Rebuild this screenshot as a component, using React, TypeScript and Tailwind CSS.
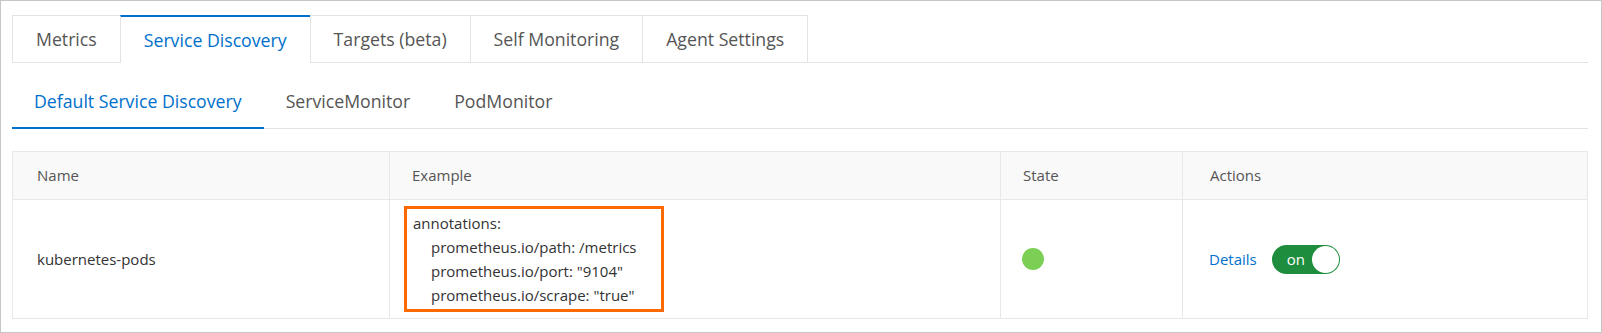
import React from "react";

const tabs = ["Metrics", "Service Discovery", "Targets (beta)", "Self Monitoring", "Agent Settings"];
const subTabs = ["Default Service Discovery", "ServiceMonitor", "PodMonitor"];

function Toggle() {
  return (
    <div className="flex h-[29px] w-[68px] items-center rounded-full bg-[#1e8e3e] pl-[15px] pr-px">
      <span className="text-[15px] leading-none text-white">on</span>
      <span className="ml-auto h-[27px] w-[27px] rounded-full bg-white" />
    </div>
  );
}

export default function App() {
  return (
    <div
      className="h-[333px] w-[1602px] overflow-hidden border border-[#c6c6c6] bg-white pl-[11px] pr-[13px] pt-[14px] text-[#333]"
      style={{ fontFamily: '"Open Sans", "Noto Sans", sans-serif' }}
    >
      {/* top tabs */}
      <div className="flex border-b border-[#e3e3e3]">
        {tabs.map((t, i) => (
          <div
            key={t}
            className={
              i === 1
                ? "-mb-px -ml-px flex h-[48px] items-center border-x border-t-2 border-[#e3e3e3] border-t-[#0070cc] bg-white px-[23px] text-[17.7px] text-[#0070cc]"
                : "-ml-px flex h-[47px] items-center border-x border-t border-[#e3e3e3] px-[23px] pt-px text-[17.7px] text-[#555] first:ml-0"
            }
          >
            {t}
          </div>
        ))}
      </div>

      {/* sub tabs */}
      <div className="mt-[17px] flex border-b border-[#e3e3e3]">
        {subTabs.map((t, i) => (
          <div
            key={t}
            className={
              i === 0
                ? "-mb-px flex h-[49px] items-start border-b-2 border-[#0070cc] px-[22px] pt-[8px] text-[17.7px] text-[#0070cc]"
                : "flex h-[48px] items-start px-[22px] pt-[8px] text-[17.7px] text-[#555]"
            }
          >
            {t}
          </div>
        ))}
      </div>

      {/* table */}
      <div className="mt-[22px] border border-[#e8e8e8]">
        <div className="grid h-[47px] grid-cols-[376px_611px_182px_1fr] bg-[#f9f9f9] text-[15px] text-[#555]">
          <div className="flex items-center pl-[24px]">Name</div>
          <div className="flex items-center border-l border-[#e8e8e8] pl-[22px]">Example</div>
          <div className="flex items-center border-l border-[#e8e8e8] pl-[22px]">State</div>
          <div className="flex items-center border-l border-[#e8e8e8] pl-[27px]">Actions</div>
        </div>
        <div className="grid h-[119px] grid-cols-[376px_611px_182px_1fr] border-t border-[#e8e8e8] text-[15px] text-[#333]">
          <div className="flex items-center pl-[24px]">kubernetes-pods</div>
          <div className="flex items-center border-l border-[#e8e8e8] pl-[14px]">
            <div className="w-[260px] border-[3px] border-[#ff6a00] py-[2px] pl-[6px] leading-[24px]">
              <div>annotations:</div>
              <div className="pl-[18px]">prometheus.io/path: /metrics</div>
              <div className="pl-[18px]">prometheus.io/port: "9104"</div>
              <div className="pl-[18px]">prometheus.io/scrape: "true"</div>
            </div>
          </div>
          <div className="flex items-center border-l border-[#e8e8e8] pl-[21px]">
            <span className="h-[22px] w-[22px] rounded-full bg-[#7ccf55]" />
          </div>
          <div className="flex items-center gap-[15px] border-l border-[#e8e8e8] pl-[26px]">
            <span className="text-[15px] text-[#0070cc]">Details</span>
            <Toggle />
          </div>
        </div>
      </div>
    </div>
  );
}
